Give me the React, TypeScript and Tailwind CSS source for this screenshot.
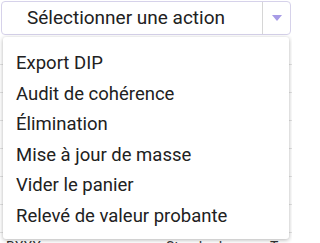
import React from 'react';

const actions = [
  'Export DIP',
  'Audit de cohérence',
  'Élimination',
  'Mise à jour de masse',
  'Vider le panier',
  'Relevé de valeur probante',
];

const App = () => {
  return (
    <div
      className="relative h-[243px] w-[292px] overflow-hidden bg-white text-[#212121]"
      style={{ fontFamily: 'Roboto, "Noto Sans", sans-serif' }}
    >
      {/* action selector */}
      <div className="ml-[1px] mt-[1px] flex h-[34px] w-[290px] rounded-[4px] border border-[#d6d2ea] bg-white">
        <button className="flex flex-1 items-center justify-center pr-[12px] text-[19px] text-[#212121]">
          Sélectionner une action
        </button>
        <div className="flex w-[28px] items-center justify-center border-l border-[#d6d6d6]">
          <svg width="10" height="6" viewBox="0 0 10 6">
            <path d="M0 0 L10 0 L5 6 Z" fill="#a79be6" />
          </svg>
        </div>
      </div>

      {/* table behind the menu, only its last row peeks out */}
      <div className="mt-[2px] flex flex-col text-[14px] text-[#333]">
        {Array.from({ length: 7 }).map((_, i) => (
          <div key={i} className="h-[28px] border-b border-[#e2e2e2]" />
        ))}
        <div className="flex h-[28px] items-start px-[6px] pt-[4px]">
          <span className="w-[160px]">BXXX</span>
          <span className="w-[104px]">Standard</span>
          <span>Ty</span>
        </div>
      </div>

      {/* dropdown menu */}
      <div className="absolute left-[3px] top-[37px] flex h-[202px] w-[286px] flex-col rounded-[3px] bg-white pt-[12px] shadow-[0_1px_4px_rgba(0,0,0,0.3)]">
        {actions.map((label) => (
          <div key={label} className="flex h-[30.5px] items-center px-[13px] text-[18.5px] text-[#212121]">
            {label}
          </div>
        ))}
      </div>
    </div>
  );
};

export default App;
